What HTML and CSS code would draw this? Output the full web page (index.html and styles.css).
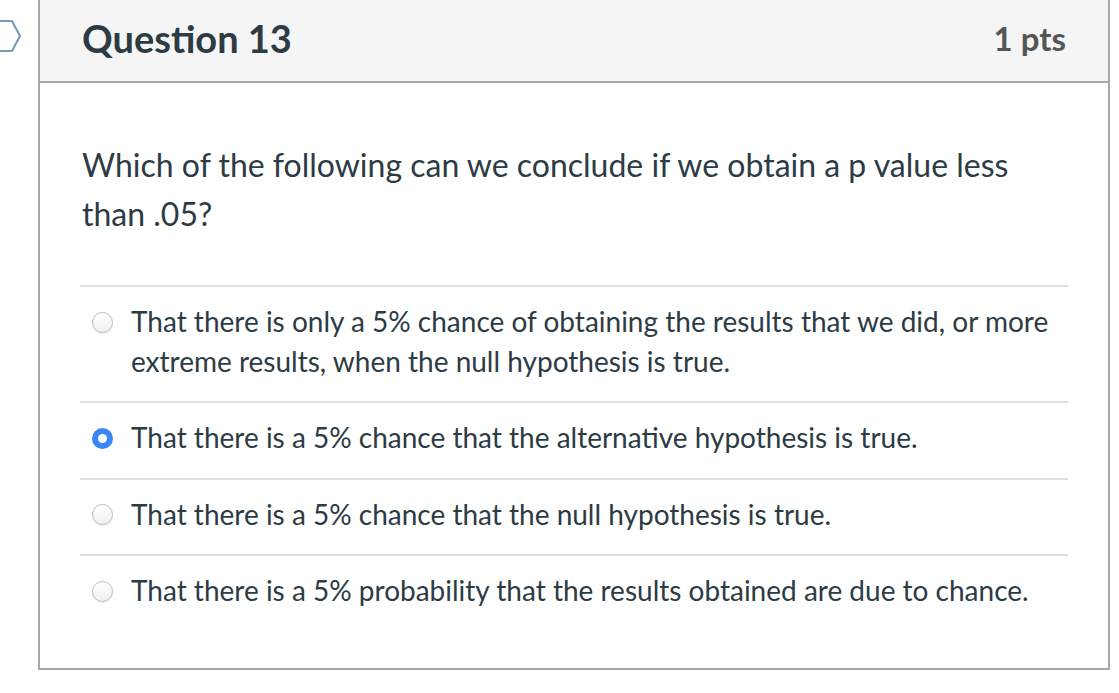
FILE: index.html
```html
<!DOCTYPE html>
<html>
<head>
<meta charset="utf-8">
<link rel="stylesheet" href="styles.css">
</head>
<body>
<div class="page">
  <div class="marker">
    <svg width="24" height="34" viewBox="0 0 24 34"><path d="M-4 2 H12 L20 17 L12 32 H-4" fill="none" stroke="#7d9bb4" stroke-width="2.2" stroke-linejoin="miter"/></svg>
  </div>
  <div class="question">
    <div class="q-header">
      <h2 class="q-title">Question 13</h2>
      <div class="q-points">1 pts</div>
    </div>
    <div class="q-body">
      <p class="q-text">Which of the following can we conclude if we obtain a p value less than .05?</p>
      <div class="answers">
        <label class="answer"><span class="radio"></span><span class="a-text">That there is only a 5% chance of obtaining the results that we did, or more extreme results, when the null hypothesis is true.</span></label>
        <label class="answer"><span class="radio checked"></span><span class="a-text">That there is a 5% chance that the alternative hypothesis is true.</span></label>
        <label class="answer"><span class="radio"></span><span class="a-text">That there is a 5% chance that the null hypothesis is true.</span></label>
        <label class="answer"><span class="radio"></span><span class="a-text">That there is a 5% probability that the results obtained are due to chance.</span></label>
      </div>
    </div>
  </div>
</div>
</body>
</html>
```
FILE: styles.css
```css
html, body {
  margin: 0;
  padding: 0;
  background: #fff;
  font-family: Lato, "Liberation Sans", sans-serif;
  color: #2d3b45;
}
.page {
  display: flex;
  align-items: flex-start;
}
.marker {
  width: 38px;
  padding-top: 19px;
  flex: none;
}
.marker svg { display: block; }
.question {
  width: 1072px;
  border: 2px solid #a8a8a8;
  border-top: none;
  height: 670px;
  box-sizing: border-box;
}
.q-header {
  height: 81px;
  background: #f5f5f5;
  border-bottom: 2px solid #a8a8a8;
  display: flex;
  align-items: center;
  justify-content: space-between;
  padding: 0 42px;
  box-sizing: content-box;
}
.q-title {
  margin: 0;
  font-size: 38px;
  font-weight: 700;
  color: #2d3b45;
  padding-bottom: 6px;
}
.q-points {
  font-size: 33px;
  font-weight: 700;
  color: #555;
  padding-bottom: 6px;
}
.q-body {
  padding: 0 40px;
}
.q-text {
  margin: 0;
  padding: 57px 2px 0;
  font-size: 32px;
  line-height: 49px;
  height: 145px;
}
.answers {
  display: flex;
  flex-direction: column;
}
.answer {
  display: flex;
  align-items: flex-start;
  border-top: 2px solid #e0e0e0;
  padding: 15px 0 20px 12px;
  font-size: 28px;
  line-height: 39.5px;
}
.radio {
  flex: none;
  width: 21px;
  height: 21px;
  box-sizing: border-box;
  border-radius: 50%;
  border: 1px solid #bdbdbd;
  background: linear-gradient(#fff, #f0f0f0);
  box-shadow: 0 1px 1px rgba(0,0,0,0.08);
  margin-top: 9.5px;
  margin-right: 18px;
}
.radio.checked {
  border: 6.5px solid #3b86f5;
  background: #fff;
  box-shadow: none;
}
.a-text {
  flex: 1;
}
```
